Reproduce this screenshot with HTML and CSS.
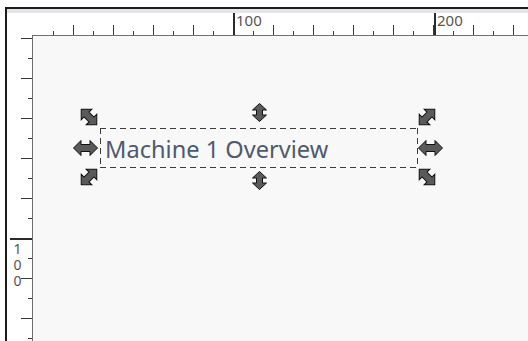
FILE: index.html
```html
<!DOCTYPE html>
<html lang="en">
<head>
    <meta charset="UTF-8">
    <meta name="viewport" content="width=device-width, initial-scale=1.0">
    <title>Canvas editor</title>
    <link rel="stylesheet" href="styles.css">
</head>
<body>
    <svg class="defs" width="0" height="0">
        <symbol id="arrow-h" viewBox="0 0 25 16">
            <polygon points="0.5,8 8,0.5 8,4.5 17,4.5 17,0.5 24.5,8 17,15.5 17,11.5 8,11.5 8,15.5" />
        </symbol>
        <symbol id="arrow-v" viewBox="0 0 15 19">
            <polygon points="7.5,0.5 14.5,7 10.5,7 10.5,12 14.5,12 7.5,18.5 0.5,12 4.5,12 4.5,7 0.5,7" />
        </symbol>
        <symbol id="arrow-nwse" viewBox="0 0 18 18">
            <polygon transform="rotate(45 9 9)" points="-2,9 5.5,1.5 5.5,5.5 12.5,5.5 12.5,1.5 20,9 12.5,16.5 12.5,12.5 5.5,12.5 5.5,16.5" />
        </symbol>
        <symbol id="arrow-nesw" viewBox="0 0 18 18">
            <polygon transform="rotate(-45 9 9)" points="-2,9 5.5,1.5 5.5,5.5 12.5,5.5 12.5,1.5 20,9 12.5,16.5 12.5,12.5 5.5,12.5 5.5,16.5" />
        </symbol>
    </svg>

    <div class="frame">
        <div class="strip"></div>
        <div class="workspace">
            <div class="corner"></div>
            <div class="ruler ruler-h">
                <span class="major" style="left: 201px"></span>
                <span class="mark" style="left: 204px">100</span>
                <span class="major" style="left: 402px"></span>
                <span class="mark" style="left: 405px">200</span>
            </div>
            <div class="ruler ruler-v">
                <span class="major" style="top: 203px"></span>
                <span class="mark" style="top: 204px">100</span>
            </div>
            <div class="canvas">
                <div class="text-object">
                    <span class="label">Machine 1 Overview</span>
                    <svg class="handle diag tl"><use href="#arrow-nwse" /></svg>
                    <svg class="handle vert tc"><use href="#arrow-v" /></svg>
                    <svg class="handle diag tr"><use href="#arrow-nesw" /></svg>
                    <svg class="handle horiz ml"><use href="#arrow-h" /></svg>
                    <svg class="handle horiz mr"><use href="#arrow-h" /></svg>
                    <svg class="handle diag bl"><use href="#arrow-nesw" /></svg>
                    <svg class="handle vert bc"><use href="#arrow-v" /></svg>
                    <svg class="handle diag br"><use href="#arrow-nwse" /></svg>
                </div>
            </div>
        </div>
    </div>
</body>
</html>
```

FILE: styles.css
```css
body {
    margin: 0;
    height: 341px;
    overflow: hidden;
    background-color: #ffffff;
    font-family: "Noto Sans", sans-serif;
}
.defs {
    position: absolute;
}
.frame {
    margin: 7px 0 0 5px;
    height: 334px;
    display: flex;
    flex-direction: column;
    border-top: 2px solid #1c1c1c;
    border-left: 2px solid #1c1c1c;
}
.strip {
    height: 4px;
    background-color: #e3e5e8;
}
.workspace {
    flex: 1;
    display: grid;
    grid-template-columns: 25px 1fr;
    grid-template-rows: 22px 1fr;
}
.ruler {
    position: relative;
    background-color: #ffffff;
    color: #555555;
}
.ruler-h {
    padding-left: 2px;
    background-clip: content-box;
    background-image:
        linear-gradient(to right, #3a3a3a 0 1px, transparent 1px),
        linear-gradient(to right, #3a3a3a 0 1px, transparent 1px);
    background-size: 40px 4px, 40px 10px;
    background-position: 21px 100%, 1px 100%;
    background-repeat: repeat-x;
}
.ruler-v {
    background-image:
        linear-gradient(to bottom, #3a3a3a 0 1px, transparent 1px),
        linear-gradient(to bottom, #3a3a3a 0 1px, transparent 1px);
    background-size: 4px 40px, 11px 40px;
    background-position: 100% 23px, 100% 3px;
    background-repeat: repeat-y;
}
.ruler-h .major {
    position: absolute;
    top: 0;
    bottom: 0;
    width: 2px;
    background-color: #2a2a2a;
}
.ruler-h .mark {
    position: absolute;
    top: 0;
    font-size: 15px;
    line-height: 15px;
}
.ruler-v .major {
    position: absolute;
    right: 0;
    width: 22px;
    height: 2px;
    background-color: #2a2a2a;
}
.ruler-v .mark {
    position: absolute;
    left: 3px;
    font-size: 14px;
    line-height: 14px;
    letter-spacing: -3px;
    writing-mode: vertical-lr;
    text-orientation: upright;
}
.canvas {
    background-color: #f8f8f8;
    border-top: 1px solid #6e6e6e;
    border-left: 1px solid #6e6e6e;
    padding: 92px 0 0 67px;
}
.text-object {
    position: relative;
    width: 318px;
    height: 40px;
    display: flex;
    align-items: center;
    box-sizing: border-box;
    padding: 2px 0 0 5px;
    background-image:
        repeating-linear-gradient(to right, #3c3c3c 0 6px, transparent 6px 10px),
        repeating-linear-gradient(to right, #3c3c3c 0 6px, transparent 6px 10px),
        repeating-linear-gradient(to bottom, #3c3c3c 0 6px, transparent 6px 10px),
        repeating-linear-gradient(to bottom, #3c3c3c 0 6px, transparent 6px 10px);
    background-size: 100% 1px, 100% 1px, 1px 100%, 1px 100%;
    background-position: top left, bottom left, top left, top right;
    background-repeat: no-repeat;
}
.label {
    font-size: 23.6px;
    color: #4f5a6c;
    white-space: nowrap;
}
.handle {
    position: absolute;
    fill: #5a5a5a;
    stroke: #111111;
    stroke-width: 1;
}
.diag {
    width: 18px;
    height: 18px;
}
.vert {
    width: 15px;
    height: 19px;
}
.horiz {
    width: 25px;
    height: 16px;
}
.tl { left: -20px; top: -20px; }
.tc { left: 152px; top: -25px; }
.tr { left: 318px; top: -20px; }
.ml { left: -27px; top: 12px; }
.mr { left: 318px; top: 12px; }
.bl { left: -20px; top: 40px; }
.bc { left: 152px; top: 43px; }
.br { left: 318px; top: 40px; }
```
